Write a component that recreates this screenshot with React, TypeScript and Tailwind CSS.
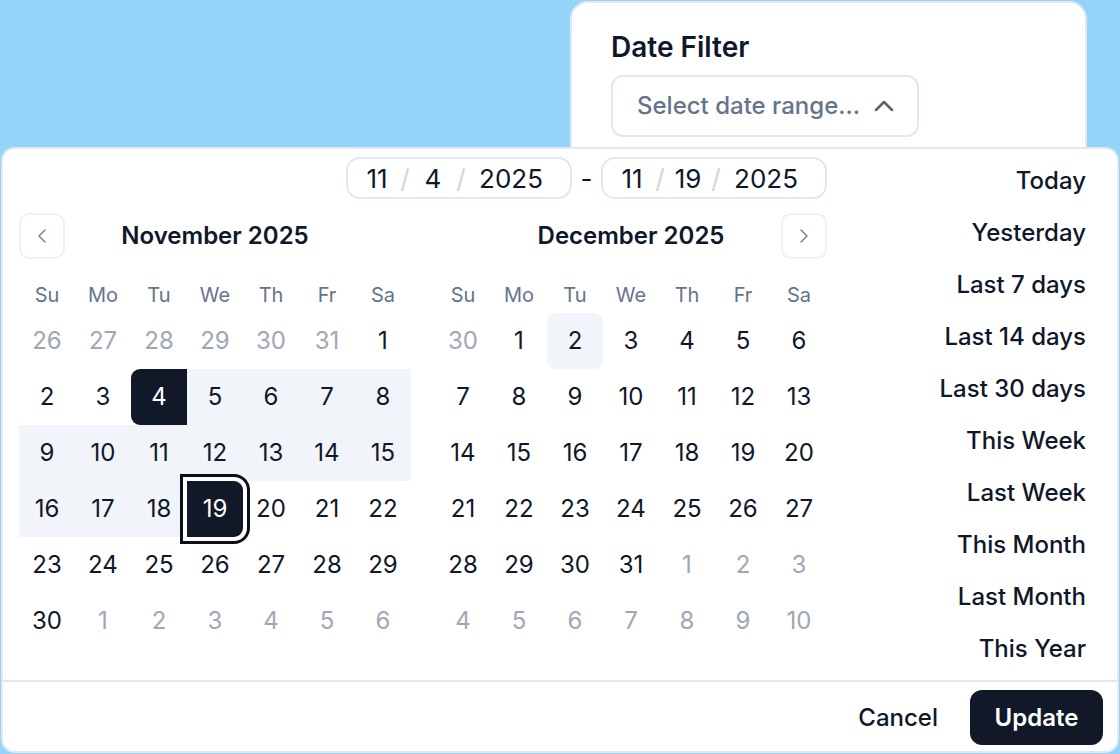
import { ChevronLeft, ChevronRight } from "lucide-react";

type Day = { n: number; outside?: boolean };

function buildMonth(lead: number[], count: number, trail: number): Day[] {
  const days: Day[] = lead.map((n) => ({ n, outside: true }));
  for (let i = 1; i <= count; i++) days.push({ n: i });
  for (let i = 1; i <= trail; i++) days.push({ n: i, outside: true });
  return days;
}

const november = buildMonth([26, 27, 28, 29, 30, 31], 30, 6);
const december = buildMonth([30], 31, 10);
const weekdays = ["Su", "Mo", "Tu", "We", "Th", "Fr", "Sa"];
const presets = [
  "Today",
  "Yesterday",
  "Last 7 days",
  "Last 14 days",
  "Last 30 days",
  "This Week",
  "Last Week",
  "This Month",
  "Last Month",
  "This Year",
];

function dayClass(day: Day, month: "nov" | "dec") {
  const base = "relative flex h-[56px] w-[56px] items-center justify-center text-[24px]";
  if (day.outside) return `${base} text-[#a0a7b4]`;
  if (month === "nov") {
    if (day.n === 4) return `${base} rounded-l-[9px] bg-[#111827] text-white`;
    if (day.n === 19)
      return `${base} z-10 rounded-r-[9px] bg-[#111827] text-white ring-[3px] ring-[#0b0f19] ring-offset-[4px] ring-offset-white`;
    if (day.n > 4 && day.n < 19) return `${base} bg-[#f1f5f9] text-[#0f172a]`;
  }
  if (month === "dec" && day.n === 2) return `${base} rounded-[9px] bg-[#f1f5f9] text-[#0f172a]`;
  return `${base} text-[#0f172a]`;
}

function MonthGrid({ days, month }: { days: Day[]; month: "nov" | "dec" }) {
  return (
    <div className="w-[392px]">
      <div className="mt-[18px] grid h-[36px] grid-cols-7 items-center">
        {weekdays.map((w) => (
          <div key={w} className="text-center text-[20px] text-[#64748b]">
            {w}
          </div>
        ))}
      </div>
      <div className="grid grid-cols-7">
        {days.map((d, i) => (
          <div key={i} className={dayClass(d, month)}>
            {d.n}
          </div>
        ))}
      </div>
    </div>
  );
}

function DateBox({ m, d, y }: { m: string; d: string; y: string }) {
  return (
    <div className="flex h-[42px] w-[226px] items-center gap-[8px] rounded-[14px] border-2 border-[#e2e8f0] pl-[14px] text-[26px] text-[#0f172a]">
      <span className="w-[30px] text-center">{m}</span>
      <span className="w-[10px] text-center text-[#d1d5db]">/</span>
      <span className="w-[30px] text-center">{d}</span>
      <span className="w-[10px] text-center text-[#d1d5db]">/</span>
      <span className="w-[74px] text-center">{y}</span>
    </div>
  );
}

function NavButton({ dir }: { dir: "prev" | "next" }) {
  return (
    <button className="flex h-[46px] w-[46px] items-center justify-center rounded-[10px] border-2 border-[#eef1f6] text-[#7b8494]">
      {dir === "prev" ? (
        <ChevronLeft size={24} strokeWidth={1.5} />
      ) : (
        <ChevronRight size={24} strokeWidth={1.5} />
      )}
    </button>
  );
}

export default function App() {
  return (
    <div className="relative h-[754px] w-[1120px] overflow-hidden bg-[#95d4f8] font-['Inter',sans-serif]">
      <section className="ml-[570px] mt-[1px] h-[240px] w-[517px] rounded-[18px] border-2 border-[#e2e8f0] bg-white pl-[39px] pt-[26px]">
        <h2 className="text-[28px] font-semibold leading-[36px] text-[#0f172a]">Date Filter</h2>
        <button className="mt-[10px] flex h-[62px] w-[308px] items-center justify-between rounded-[12px] border-2 border-[#e2e8f0] pl-[24px] pr-[22px] text-[24px] font-medium text-[#64748b]">
          <span>Select date range...</span>
          <svg width="22" height="14" viewBox="0 0 22 14" fill="none">
            <path d="M3 11 L11 3 L19 11" stroke="#5b6472" strokeWidth="2.5" strokeLinecap="round" strokeLinejoin="round" />
          </svg>
        </button>
      </section>

      <div className="absolute left-[1px] top-[147px] flex h-[606px] w-[1118px] flex-col rounded-[14px] border-2 border-[#e2e8f0] bg-white">
        <div className="flex h-[531px]">
          <div className="ml-[16px] w-[808px]">
            <div className="mt-[8px] flex items-center justify-end">
              <DateBox m="11" d="4" y="2025" />
              <span className="w-[29px] text-center text-[26px] text-[#0f172a]">-</span>
              <DateBox m="11" d="19" y="2025" />
            </div>
            <div className="mt-[14px] flex gap-[24px]">
              <div className="w-[392px]">
                <div className="relative flex h-[46px] items-center justify-center">
                  <div className="absolute left-0 top-0">
                    <NavButton dir="prev" />
                  </div>
                  <span className="text-[24px] font-semibold text-[#0f172a]">November 2025</span>
                </div>
                <MonthGrid days={november} month="nov" />
              </div>
              <div className="w-[392px]">
                <div className="relative flex h-[46px] items-center justify-center">
                  <span className="text-[24px] font-semibold text-[#0f172a]">December 2025</span>
                  <div className="absolute right-0 top-0">
                    <NavButton dir="next" />
                  </div>
                </div>
                <MonthGrid days={december} month="dec" />
              </div>
            </div>
          </div>
          <div className="flex flex-1 flex-col items-end pr-[31px] pt-[6px]">
            {presets.map((p) => (
              <div key={p} className="flex h-[52px] items-center text-[24px] font-medium text-[#0f172a]">
                {p}
              </div>
            ))}
          </div>
        </div>
        <div className="flex flex-1 items-center justify-end gap-[7px] border-t-2 border-[#e2e8f0] pr-[14px] pt-[2px]">
          <button className="h-[55px] px-[25px] text-[24px] font-medium text-[#0f172a]">Cancel</button>
          <button className="h-[55px] w-[133px] rounded-[12px] bg-[#111827] text-[24px] font-semibold text-white">
            Update
          </button>
        </div>
      </div>
    </div>
  );
}
